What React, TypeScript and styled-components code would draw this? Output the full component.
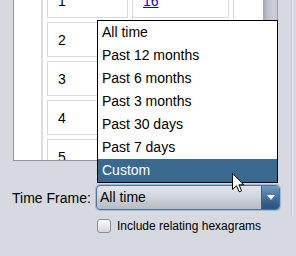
import React from 'react';
import styled, { createGlobalStyle } from 'styled-components';

const GlobalStyle = createGlobalStyle`
  body {
    margin: 0;
    background: #d6d9df;
    font-family: "Liberation Sans", Arial, sans-serif;
  }
`;

const rows = [1, 2, 3, 4, 5];

const options = [
  'All time',
  'Past 12 months',
  'Past 6 months',
  'Past 3 months',
  'Past 30 days',
  'Past 7 days',
  'Custom',
];

const App: React.FC = () => {
  const selected = 'Custom';

  return (
    <Frame>
      <GlobalStyle />
      <Upper>
        <Content>
          <TableArea>
            <ScrollPane>
              <Viewport>
                <Table>
                  <tbody>
                    {rows.map((row, index) => (
                      <tr key={row}>
                        <NumCell>{row}</NumCell>
                        <LinkCell>{row === 1 && <Link href="#">16</Link>}</LinkCell>
                        {index === 0 && <SideCell rowSpan={rows.length} />}
                      </tr>
                    ))}
                  </tbody>
                </Table>
              </Viewport>
              <ScrollBar />
            </ScrollPane>
          </TableArea>
          <TimeRow>
            <Label>Time Frame:</Label>
            <Combo>
              <ComboText>All time</ComboText>
              <ArrowButton>
                <svg width="8" height="5" viewBox="0 0 8 5">
                  <path d="M0 0 L8 0 L4 5 Z" fill="#fff" />
                </svg>
              </ArrowButton>
            </Combo>
          </TimeRow>
        </Content>
        <Divider />
      </Upper>
      <CheckRow>
        <CheckBox />
        <CheckLabel>Include relating hexagrams</CheckLabel>
      </CheckRow>

      <Popup>
        {options.map((option) => (
          <Item key={option} active={option === selected}>
            {option}
          </Item>
        ))}
      </Popup>

      <Cursor width="13" height="20" viewBox="0 0 13 20">
        <path
          d="M0.5 0.5 L0.5 16.5 L4.5 12.8 L7.2 18.8 L9.6 17.8 L7 11.8 L12 11.8 Z"
          fill="#fff"
          stroke="#000"
          strokeWidth="1"
          strokeLinejoin="miter"
        />
      </Cursor>
    </Frame>
  );
};

const Frame = styled.div`
  position: relative;
  width: 296px;
  height: 256px;
  overflow: hidden;
  display: flex;
  flex-direction: column;
  background: #d6d9df;
`;

const Upper = styled.div`
  display: flex;
  height: 216px;
`;

const Content = styled.div`
  width: 291px;
  display: flex;
  flex-direction: column;
`;

const Divider = styled.div`
  width: 1px;
  background: #c4c8cf;
  border-right: 1px solid #e6e8ec;
`;

const TableArea = styled.div`
  height: 161px;
  display: flex;
  padding-left: 13px;
`;

const ScrollPane = styled.div`
  width: 265px;
  display: flex;
  background: #fff;
  border-left: 1px solid #8e939c;
  border-bottom: 1px solid #8e939c;
  box-sizing: border-box;
`;

const Viewport = styled.div`
  flex: 1;
  overflow: hidden;
  padding-left: 27px;
`;

const ScrollBar = styled.div`
  width: 14px;
  background: linear-gradient(to right, #a3a6ae, #bfc2c9 35%, #cbced5 70%, #c6c9d0);
  border-right: 1px solid #9ea2ab;
`;

const Table = styled.table`
  margin-top: -23px;
  width: 278px;
  table-layout: fixed;
  border-collapse: separate;
  border-spacing: 4px;
  border: 2px solid #dedede;
  font-size: 14px;
  color: #000;
`;

const Cell = styled.td`
  box-sizing: border-box;
  height: 35px;
  padding: 0 10px;
  border: 1px solid #d9d9d9;
  vertical-align: middle;
`;

const NumCell = styled(Cell)`
  width: 81px;
`;

const LinkCell = styled(Cell)`
  width: 97px;
`;

const SideCell = styled(Cell)`
  width: 80px;
`;

const Link = styled.a`
  color: #0000ee;
  text-decoration: underline;
`;

const TimeRow = styled.div`
  display: flex;
  align-items: center;
  margin-top: 24px;
  padding-left: 12px;
  height: 25px;
`;

const Label = styled.span`
  width: 84px;
  font-size: 14px;
  color: #000;
`;

const Combo = styled.div`
  width: 184px;
  height: 25px;
  box-sizing: border-box;
  display: flex;
  border: 1px solid #4f7396;
  border-radius: 4px;
  box-shadow: 0 0 0 1px #9dbcdb;
  overflow: hidden;
  background: linear-gradient(#e2e4e8, #d3d6dc 45%, #c2c6cd 75%, #b7bbc3);
`;

const ComboText = styled.span`
  flex: 1;
  padding-left: 3px;
  font-size: 14px;
  line-height: 23px;
  color: #000;
`;

const ArrowButton = styled.div`
  width: 17px;
  display: flex;
  align-items: center;
  justify-content: center;
  background: linear-gradient(#7399bd, #4a76a0 45%, #335e89 75%, #2c5580);
  border-left: 1px solid #3a628a;
`;

const CheckRow = styled.div`
  display: flex;
  align-items: center;
  margin-top: 3px;
  padding-left: 97px;
`;

const CheckBox = styled.div`
  width: 14px;
  height: 14px;
  box-sizing: border-box;
  border: 1px solid #8a8e96;
  border-radius: 3px;
  background: linear-gradient(#fbfbfc, #e4e6ea 60%, #d3d6db);
`;

const CheckLabel = styled.span`
  margin-left: 6px;
  font-size: 12px;
  color: #000;
`;

const Popup = styled.div`
  position: absolute;
  left: 97px;
  top: 20px;
  width: 181px;
  box-sizing: border-box;
  border: 1px solid #000;
  background: #fff;
`;

const Item = styled.div<{ active: boolean }>`
  height: 23px;
  line-height: 23px;
  padding-left: 4px;
  font-size: 14px;
  color: ${(p) => (p.active ? '#fff' : '#000')};
  background: ${(p) => (p.active ? '#39698f' : 'transparent')};
`;

const Cursor = styled.svg`
  position: absolute;
  left: 232px;
  top: 173px;
`;

export default App;
